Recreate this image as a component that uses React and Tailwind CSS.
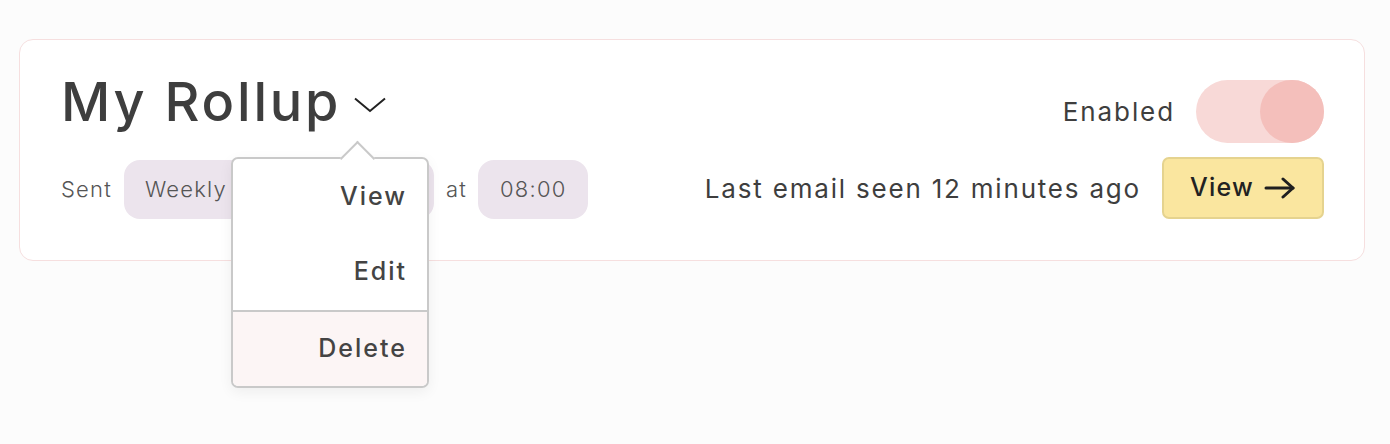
import React from 'react';

const font = { fontFamily: 'Inter, "Liberation Sans", sans-serif' };

// chevron under the title
const Chevron = () => (
  <svg width="32" height="16" viewBox="0 0 32 16" fill="none">
    <polyline points="1,1.5 16,14 31,1.5" stroke="#222" strokeWidth="2" />
  </svg>
);

const Arrow = () => (
  <svg width="32" height="22" viewBox="0 0 32 22" fill="none">
    <line x1="2" y1="11" x2="29" y2="11" stroke="#1f1f1f" strokeWidth="3" strokeLinecap="round" />
    <polyline points="19,2 29,11 19,20" stroke="#1f1f1f" strokeWidth="3" strokeLinecap="round" strokeLinejoin="round" />
  </svg>
);

const Pill = ({ children, className = '' }) => (
  <span className={`inline-flex h-[59px] items-center rounded-[16px] bg-[#ece4ed] px-[21px] text-[22px] font-light tracking-[1.2px] text-[#555] ${className}`}>
    {children}
  </span>
);

const Menu = () => (
  <div className="absolute left-[211px] top-[117px] w-[198px] rounded-[7px] border-2 border-[#c9c9c9] bg-white shadow-[0_4px_14px_rgba(0,0,0,0.06)]">
    <div className="absolute left-[112px] top-[-13px] h-[25px] w-[25px] rotate-45 border-l-2 border-t-2 border-[#c9c9c9] bg-white" />
    <div className="relative flex h-[75px] items-center justify-end pr-[20px] text-[25px] font-medium tracking-[2px] text-[#444]">View</div>
    <div className="relative flex h-[76px] items-center justify-end pr-[20px] text-[25px] font-medium tracking-[2px] text-[#444]">Edit</div>
    <div className="flex h-[76px] items-center justify-end rounded-b-[5px] border-t-2 border-[#c9c9c9] bg-[#fcf5f5] pr-[20px] text-[25px] font-medium tracking-[2px] text-[#444]">Delete</div>
  </div>
);

export default function App() {
  return (
    <div className="min-h-[444px] w-full bg-[#fcfcfc] pl-[19px] pr-[25px] pt-[39px]" style={font}>
      <div className="relative flex justify-between rounded-[14px] border border-[#f6dfdf] bg-white pb-[41px] pl-[41px] pr-[40px] pt-[40px]">
        <div className="mt-[-5px] flex flex-col">
          <div className="flex items-center gap-[13px]">
            <h1 className="text-[54px] font-medium leading-none tracking-[2.8px] text-[#3e3e3e]">My Rollup</h1>
            <span className="mt-[6px]"><Chevron /></span>
          </div>
          <div className="mt-[31px] flex items-center">
            <span className="mr-[12px] text-[22px] font-light tracking-[1.2px] text-[#555]">Sent</span>
            <Pill className="w-[310px]">Weekly</Pill>
            <span className="ml-[12px] mr-[11px] text-[22px] font-light tracking-[1.2px] text-[#555]">at</span>
            <Pill className="px-[22px]">08:00</Pill>
          </div>
        </div>

        <div className="flex flex-col items-end">
          <div className="flex items-center gap-[21px]">
            <span className="text-[26px] tracking-[1.9px] text-[#3e3e3e]">Enabled</span>
            <div className="flex h-[63px] w-[128px] justify-end rounded-full bg-[#f8d9d7]">
              <div className="h-[63px] w-[64px] rounded-full bg-[#f4bfbb]" />
            </div>
          </div>
          <div className="mt-[14px] flex items-center gap-[21px]">
            <span className="text-[26px] tracking-[1.8px] text-[#3e3e3e]">Last email seen 12 minutes ago</span>
            <button className="flex h-[62px] w-[162px] items-center justify-center gap-[10px] rounded-[7px] border-2 border-[#e5d38f] bg-[#fae69f] text-[25px] font-medium tracking-[1.2px] text-[#222]">
              View <Arrow />
            </button>
          </div>
        </div>

        <Menu />
      </div>
    </div>
  );
}
